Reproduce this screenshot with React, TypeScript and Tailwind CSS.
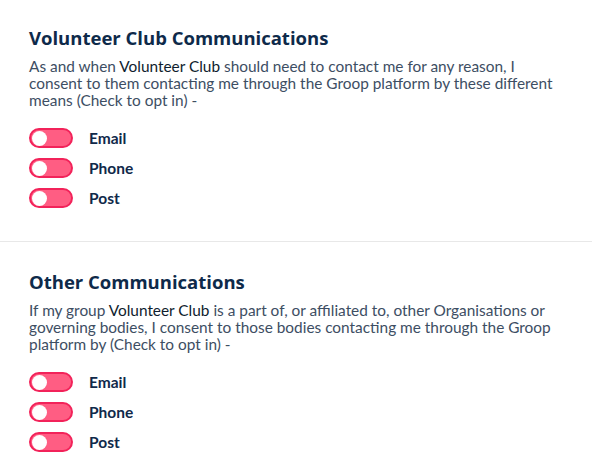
const channels = ["Email", "Phone", "Post"];

function Toggle() {
  return (
    <span className="flex h-[20px] w-[44px] shrink-0 items-center rounded-full border-2 border-[#f2235a] bg-[#ff5d83] pl-[1px]">
      <span className="h-[15px] w-[15px] rounded-full bg-white" />
    </span>
  );
}

function Section({
  title,
  children,
  last = false,
}: {
  title: string;
  children: React.ReactNode;
  last?: boolean;
}) {
  return (
    <section
      className={`pl-[29px] pr-[22px] pb-[33px] ${last ? "pt-[30px]" : "pt-[28px] border-b border-[#e8e8e8]"}`}
    >
      <h2 className="font-['Open_Sans',sans-serif] text-[18.5px] leading-[20px] font-bold text-[#0e2a4a]">
        {title}
      </h2>
      <p className="mt-[10px] font-['Lato',sans-serif] text-[15.4px] leading-[17px] text-[#3d4e63]">
        {children}
      </p>
      <div className="mt-[19px] flex flex-col gap-[10px]">
        {channels.map((c) => (
          <label key={c} className="flex h-[20px] items-center gap-[16px]">
            <Toggle />
            <span className="font-['Lato',sans-serif] text-[15.5px] leading-[20px] font-bold text-[#10294a]">
              {c}
            </span>
          </label>
        ))}
      </div>
    </section>
  );
}

export default function App() {
  return (
    <div className="min-h-[455px] w-[592px] bg-white">
      <Section title="Volunteer Club Communications">
        As and when <span className="text-[#0f1d2e]">Volunteer Club</span> should need to
        contact me for any reason, I consent to them contacting me through the Groop platform by
        these different means (Check to opt in) -
      </Section>
      <Section title="Other Communications" last>
        If my group <span className="text-[#0f1d2e]">Volunteer Club</span> is a part of, or
        affiliated to, other Organisations or governing bodies, I consent to those bodies
        contacting me through the Groop platform by (Check to opt in) -
      </Section>
    </div>
  );
}
